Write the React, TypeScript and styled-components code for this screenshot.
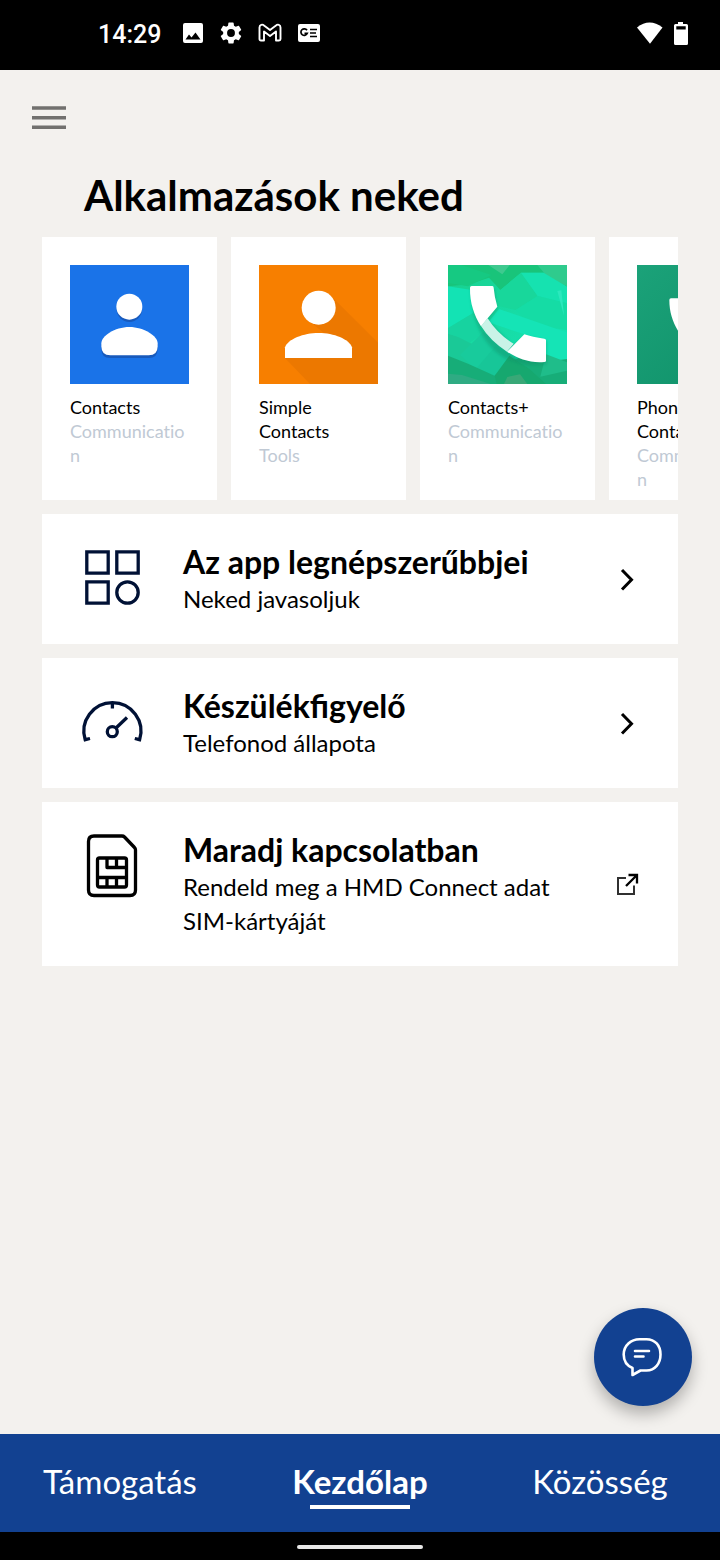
import React from "react";
import styled, { createGlobalStyle } from "styled-components";

const GlobalStyle = createGlobalStyle`
  * { box-sizing: border-box; }
  body {
    margin: 0;
    background: #000;
    font-family: Lato, "Open Sans", sans-serif;
    color: #000;
  }
  h1, h2, h3, p, ul { margin: 0; padding: 0; }
  svg { display: block; flex: none; }
`;

const Screen = styled.div`
  min-height: 100vh;
  display: flex;
  flex-direction: column;
  background: #f3f1ee;
`;

const StatusBar = styled.div`
  height: 70px;
  padding: 0 31px 4px 98px;
  display: flex;
  align-items: center;
  justify-content: space-between;
  background: #000;
  color: #fff;
`;

const StatusGroup = styled.div<{ $gap: number }>`
  display: flex;
  align-items: center;
  gap: ${(p) => p.$gap}px;
`;

const Clock = styled.time`
  font: 500 25px/32px Roboto, sans-serif;
  padding-top: 3px;
  margin-right: 6px;
`;

const Main = styled.main`
  position: relative;
  flex: 1;
  padding: 0 42px 140px;
`;

const TopBar = styled.header`
  height: 95px;
  margin-left: -10px;
  display: flex;
  align-items: center;
`;

const IconButton = styled.button`
  padding: 0;
  border: 0;
  background: none;
  cursor: pointer;
`;

const PageTitle = styled.h1`
  padding: 0 42px;
  margin-bottom: 12px;
  font-size: 42px;
  font-weight: 700;
  line-height: 60px;
`;

const Carousel = styled.ul`
  display: flex;
  gap: 14px;
  overflow-x: auto;
  scrollbar-width: none;
  list-style: none;
`;

const AppCard = styled.li`
  flex: none;
  width: 175px;
  padding: 28px 28px 9px;
  background: #fff;
`;

const AppText = styled.p<{ $muted?: boolean }>`
  font-size: 18px;
  font-variant-ligatures: none;
  line-height: 24px;
  word-break: ${(p) => (p.$muted ? "break-all" : "normal")};
  color: ${(p) => (p.$muted ? "#c0c9d4" : "#000")};
`;

const AppName = styled(AppText).attrs({ as: "h3" })`
  margin-top: 11px;
  font-weight: 400;
`;

const LinkList = styled.div`
  display: flex;
  flex-direction: column;
  gap: 14px;
  margin-top: 14px;
`;

const LinkCard = styled.a`
  display: flex;
  align-items: center;
  padding: 28px 36px;
  background: #fff;
  color: inherit;
  text-decoration: none;
`;

const LinkIcon = styled.span`
  align-self: flex-start;
  width: 105px;
`;

const LinkBody = styled.div`
  flex: 1;
  min-width: 0;
  padding-right: 20px;
`;

const LinkTitle = styled.h2`
  font-size: 32px;
  font-weight: 700;
  line-height: 40px;
`;

const LinkText = styled.p`
  font-size: 24px;
  line-height: 34px;
`;

const ChatButton = styled.button`
  position: absolute;
  right: 28px;
  bottom: 28px;
  width: 98px;
  height: 98px;
  padding: 0;
  display: grid;
  place-items: center;
  border: 0;
  border-radius: 50%;
  background: #124191;
  box-shadow: 0 8px 16px rgba(0, 0, 0, 0.28);
  cursor: pointer;
`;

const TabBar = styled.nav`
  display: grid;
  grid-template-columns: repeat(3, 1fr);
  height: 98px;
  background: #124191;
`;

const Tab = styled.a<{ $active?: boolean }>`
  display: flex;
  flex-direction: column;
  align-items: center;
  padding-top: 23px;
  color: #fff;
  font-size: 33px;
  font-weight: ${(p) => (p.$active ? 700 : 400)};
  line-height: 48px;
  text-decoration: none;

  &::after {
    content: "";
    width: 100px;
    height: 4px;
    background: ${(p) => (p.$active ? "#fff" : "transparent")};
  }
`;

const GestureBar = styled.div`
  height: 28px;
  display: grid;
  place-items: center;
  background: #000;

  &::after {
    content: "";
    width: 126px;
    height: 4px;
    margin-top: 2px;
    border-radius: 2px;
    background: #e8e8e8;
  }
`;

const PictureIcon = () => (
  <svg width="22" height="22" viewBox="0 0 22 22">
    <path fill="#fff" fillRule="evenodd" d="M3 1h16a2 2 0 0 1 2 2v16a2 2 0 0 1-2 2H3a2 2 0 0 1-2-2V3a2 2 0 0 1 2-2zM3.500 17.500h15l-5-7-4 5-2.500-3z" />
  </svg>
);

const GearIcon = () => (
  <svg width="24" height="24" viewBox="1 1 22 22">
    <path fill="#fff" d="M19.140 12.940c.04-.3.06-.61.06-.94 0-.32-.02-.64-.07-.94l2.030-1.580a.49.49 0 0 0 .12-.61l-1.920-3.320a.488.488 0 0 0-.59-.22l-2.390.96c-.5-.38-1.030-.7-1.620-.94l-.36-2.540a.484.484 0 0 0-.48-.41h-3.840c-.24 0-.43.17-.47.41l-.36 2.540c-.59.24-1.130.57-1.620.94l-2.390-.96c-.22-.08-.47 0-.59.22L2.740 8.870c-.12.21-.08.47.12.61l2.030 1.580c-.05.3-.09.63-.09.94s.02.64.07.94l-2.030 1.580a.49.49 0 0 0-.12.61l1.920 3.320c.12.22.37.29.59.22l2.390-.96c.5.38 1.030.7 1.620.94l.36 2.540c.05.24.24.41.48.41h3.840c.24 0 .44-.17.47-.41l.36-2.540c.59-.24 1.130-.56 1.620-.94l2.390.96c.22.08.47 0 .59-.22l1.920-3.320c.12-.22.07-.47-.12-.61l-2.010-1.580zM12 15.600A3.600 3.600 0 1 1 12 8.400a3.600 3.600 0 0 1 0 7.200z" />
  </svg>
);

const MailIcon = () => (
  <svg width="24" height="20" viewBox="0 0 24 20">
    <path fill="none" stroke="#fff" strokeWidth="1.900" strokeLinejoin="round" d="M1.500 4.500C1.500 1.500 4.500 1 6 2.500l6 4.500 6-4.500c1.500-1.500 4.500-1 4.500 2V16q0 1.500-1.500 1.500h-3V8.500l-6 4.500-6-4.500v9H3Q1.500 17.500 1.500 16z" />
  </svg>
);

const NewsIcon = () => (
  <svg width="24" height="20" viewBox="0 0 24 20">
    <rect x="1" y="1" width="22" height="18" rx="2" fill="#fff" />
    <path fill="none" stroke="#000" strokeWidth="1.700" d="M10 7.300A3.300 3.300 0 1 0 10.300 10.300H7.500M13 6.500h7M13 10h6M13 13.500h7" />
  </svg>
);

const WifiIcon = () => (
  <svg width="28" height="24" viewBox="0 0 28 24">
    <path fill="#fff" d="M1 6.500Q13.500-3.500 26.500 6.500L14 22.800z" />
  </svg>
);

const BatteryIcon = () => (
  <svg width="16" height="24" viewBox="0 0 16 24">
    <path fill="#fff" fillRule="evenodd" d="M5 1h5v2h3.500Q15 3 15 4.500v18q0 1.500-1.500 1.500h-11Q1 24 1 22.500v-18Q1 3 2.500 3H5zM3.300 5.300v3.200h9.400v-3.200z" />
  </svg>
);

const MenuIcon = () => (
  <svg width="34" height="24" viewBox="0 0 34 24">
    <path stroke="#71706e" strokeWidth="3.400" d="M0 2h34M0 11.700h34M0 21.200h34" />
  </svg>
);

const ContactsArt = () => (
  <svg width="119" height="119" viewBox="90 90 357 357">
    <path fill="#1a73e8" d="M90 90h357v357H90z" />
    <g fill="#185abc" transform="translate(0 8)">
      <circle cx="268" cy="215" r="38" />
      <path d="M184 325c0-22 40-49 84-49s85 27 85 49v9q0 27-27 27H211q-27 0-27-27z" />
    </g>
    <g fill="#fff">
      <circle cx="268" cy="215" r="39" />
      <path d="M184 325c0-22 40-49 84-49s85 27 85 49v9q0 27-27 27H211q-27 0-27-27z" />
    </g>
  </svg>
);

const SimpleContactsArt = () => (
  <svg width="119" height="119" viewBox="87 90 357 357">
    <path fill="#f77f00" d="M87 90h357v357H87z" />
    <path fill="#ec7800" d="M312 192 444 323v124H240l-75-78 120-72-48-40z" />
    <circle cx="266" cy="218" r="51" fill="#fff" />
    <path fill="#fff" d="M165 369v-32c9-25 55-43 101-43s91 18 100 43v32z" />
  </svg>
);

const ContactsPlusArt = () => (
  <svg width="119" height="119" viewBox="84 90 357 357">
    <defs>
      <linearGradient id="mint" x1="0" y1="0" x2="1" y2="1">
        <stop offset="0" stopColor="#19cf8b" />
        <stop offset=".5" stopColor="#17dca6" />
        <stop offset="1" stopColor="#12e6b8" />
      </linearGradient>
      <filter id="handsetShadow" x="-20%" y="-20%" width="140%" height="140%">
        <feGaussianBlur stdDeviation="5" />
      </filter>
    </defs>
    <path fill="url(#mint)" d="M84 90h357v357H84z" />
    <path fill="#19c47a" d="M84 90h357v65l-70-42-68 0-62 52-34-37-60 20-63 6z" />
    <path fill="#3fc98f" d="M205 90h64l-22 28z" />
    <path fill="#2fcb8d" d="M352 90h89v64l-60-30z" />
    <path fill="#16c982" d="M84 90h40l90 30-70 34-60-10z" />
    <path fill="#13e3b4" d="m84 154 66 10 10 70-76 46z" />
    <path fill="#18d79b" d="m241 165 62-52 50 70-66 42-60-14z" />
    <path fill="#16e2b0" d="m303 113 68 0 70 42v50l-88-22z" />
    <path fill="#15dca5" d="m353 183 88 22v80l-108-14-46-46z" />
    <path fill="#2ce8bd" d="m412 168 12-2 8 76z" />
    <path fill="#15e4b6" d="m205 262 32-40 180 62 24 8v90l-63-24-65-60z" />
    <path fill="#17d3a0" d="m84 280 76-46 30 60-106 76z" />
    <path fill="#1ac997" d="m84 296 30 10 80 40-24 60-86-42z" />
    <path fill="#18cb9c" d="m190 290 70 60 6 34-42 36-54-14-50-46z" />
    <path fill="#17c698" d="m170 400 56-66 34 18 30 20-64 52z" />
    <path fill="#17ad78" d="m84 362 60 24 80 36 44-42 30-12 80 12 63-8v75H84z" />
    <path fill="#16a86f" d="m224 422 44-60 60 40 50 45H230z" />
    <path fill="#1fbd8a" d="m378 358 63 24v25l-80 18z" />
    <path fill="#2fab83" d="m84 416 42 4 86 27H84z" />
    <path fill="#39a877" d="m262 426 38-8 22 29h-70z" />
    <path fill="#0b8f68" opacity=".4" filter="url(#handsetShadow)" d="M152 162h72l8 60-26 36 74 74 36-28 64 14v70c-150 20-226-90-228-226z" />
    <path fill="#c9f3e7" d="M203 250q30 48 78 76l-20 24q-50-32-78-77z" />
    <path fill="#fff" d="M150 158q0-5 5-5h62q4 0 4 5 2 26 11 57l-29 35-20 24c-20-32-34-70-33-116z" />
    <path fill="#fff" d="m261 350 24-24 28-28q24 8 60 13 5 0 5 5v61q0 4-5 4c-42 4-80-10-112-31z" />
  </svg>
);

const PhoneArt = () => (
  <svg width="119" height="119" viewBox="651 90 357 357">
    <defs>
      <linearGradient id="forest" x1="0" y1="0" x2="1" y2="1">
        <stop offset="0" stopColor="#1ba279" />
        <stop offset="1" stopColor="#0f9068" />
      </linearGradient>
    </defs>
    <path fill="url(#forest)" d="M651 90h357v357H651z" />
    <path fill="#fff" d="M748 195q0-5 5-5h50q5 0 5 5 1 20 8 40l-28 30q24 40 62 62l28-28q20 7 42 8 5 0 5 5v48q0 5-5 5c-98 0-172-74-172-170z" />
  </svg>
);

const AppsIcon = () => (
  <svg width="72" height="72" viewBox="78 542 72 72">
    <g fill="none" stroke="#001135" strokeWidth="3.300">
      <path d="M86.800 551.800h21.400v21.400H86.800zM116.800 551.800h21.400v21.400h-21.400zM86.800 581.800h21.400v21.400H86.800z" />
      <circle cx="127.500" cy="592.500" r="10.700" />
    </g>
  </svg>
);

const GaugeIcon = () => (
  <svg width="72" height="72" viewBox="78 686 72 72">
    <g fill="none" stroke="#001135" strokeWidth="3.300">
      <path d="M90 738.500l-4.800 1.200A28.500 28.500 0 1 1 139.600 739.700l-4.800-1.200M112.400 702.500v6M116 728l11-10.500" />
      <circle cx="112.300" cy="731.700" r="5" />
    </g>
  </svg>
);

const SimIcon = () => (
  <svg width="72" height="72" viewBox="78 830 72 72">
    <g fill="none" stroke="#000" strokeWidth="3.300" strokeLinejoin="round">
      <path d="M94 836h28q1.500 0 2.500 1l10 10.500q1 1 1 2.500V890q0 5.500-5.500 5.500H94q-5.500 0-5.500-5.500v-48.500Q88.500 836 94 836z" />
      <rect x="97.500" y="858" width="29" height="29" rx="2" />
      <path d="M107 858v9.500h19.500M116.500 858v9.500M97.500 877.500h29M107 877.500V887M116.500 877.500V887" />
    </g>
  </svg>
);

const ChevronIcon = () => (
  <svg width="30" height="30" viewBox="0 0 30 30">
    <path fill="none" stroke="#000" strokeWidth="3" d="M10 6l9.500 9.800L10 25.500" />
  </svg>
);

const ExternalIcon = () => (
  <svg width="30" height="30" viewBox="0 0 30 30">
    <path fill="none" stroke="#303030" strokeWidth="2" d="M14 9H6V25h16V16.500" />
    <path fill="none" stroke="#000" strokeWidth="2.300" d="M14 17l11-11M16.500 6h8.500V14.500" />
  </svg>
);

const ChatIcon = () => (
  <svg width="42" height="42" viewBox="0 0 42 42">
    <g fill="none" stroke="#fff" strokeWidth="2.600" strokeLinejoin="round" strokeLinecap="round">
      <path d="M17.500 3.200h7C33 3.200 38.500 9.500 38.500 18.500S33 34.500 24.500 34.500H18.500L10.500 39V32C4.500 29.500 1.700 24.500 1.700 18.500 1.700 9.500 9 3.200 17.500 3.200z" />
      <path d="M13 15h14M13 20.500h8.500" />
    </g>
  </svg>
);

const apps = [
  { name: "Contacts", category: "Communication", Art: ContactsArt },
  { name: "Simple Contacts", category: "Tools", Art: SimpleContactsArt },
  { name: "Contacts+", category: "Communication", Art: ContactsPlusArt },
  { name: "Phone Contacts", category: "Communication", Art: PhoneArt },
];

const links = [
  { title: "Az app legnépszerűbbjei", text: "Neked javasoljuk", Icon: AppsIcon, Action: ChevronIcon },
  { title: "Készülékfigyelő", text: "Telefonod állapota", Icon: GaugeIcon, Action: ChevronIcon },
  { title: "Maradj kapcsolatban", text: "Rendeld meg a HMD Connect adat SIM-kártyáját", Icon: SimIcon, Action: ExternalIcon },
];

export default function App() {
  return (
    <Screen>
      <GlobalStyle />
      <StatusBar>
        <StatusGroup $gap={15}>
          <Clock>14:29</Clock>
          <PictureIcon />
          <GearIcon />
          <MailIcon />
          <NewsIcon />
        </StatusGroup>
        <StatusGroup $gap={9}>
          <WifiIcon />
          <BatteryIcon />
        </StatusGroup>
      </StatusBar>
      <Main>
        <TopBar>
          <IconButton aria-label="Menü">
            <MenuIcon />
          </IconButton>
        </TopBar>
        <PageTitle>Alkalmazások neked</PageTitle>
        <Carousel>
          {apps.map(({ name, category, Art }) => (
            <AppCard key={name}>
              <Art />
              <AppName>{name}</AppName>
              <AppText $muted>{category}</AppText>
            </AppCard>
          ))}
        </Carousel>
        <LinkList>
          {links.map(({ title, text, Icon, Action }) => (
            <LinkCard key={title} href="#">
              <LinkIcon>
                <Icon />
              </LinkIcon>
              <LinkBody>
                <LinkTitle>{title}</LinkTitle>
                <LinkText>{text}</LinkText>
              </LinkBody>
              <Action />
            </LinkCard>
          ))}
        </LinkList>
        <ChatButton aria-label="Csevegés">
          <ChatIcon />
        </ChatButton>
      </Main>
      <TabBar>
        <Tab href="#">Támogatás</Tab>
        <Tab href="#" $active aria-current="page">
          Kezdőlap
        </Tab>
        <Tab href="#">Közösség</Tab>
      </TabBar>
      <GestureBar />
    </Screen>
  );
}
